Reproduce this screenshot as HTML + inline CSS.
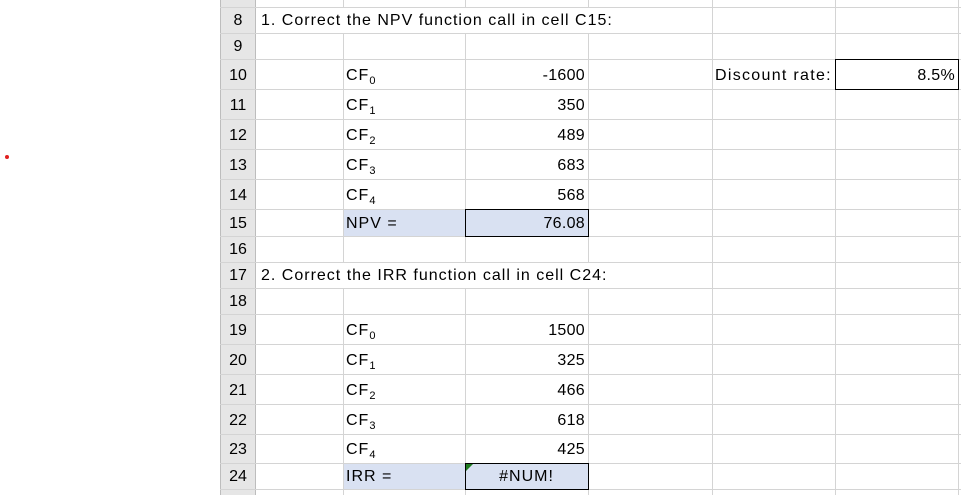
<!DOCTYPE html><html><head><meta charset="utf-8"><style>
body{margin:0;width:961px;height:495px;overflow:hidden;background:#fff;position:relative;font-family:"Liberation Sans",sans-serif;font-size:16px;color:#000}
.h{position:absolute;left:220px;width:741px;height:1px;background:#d4d4d4}
.v{position:absolute;top:0;height:495px;width:1px;background:#d4d4d4}
.t{position:absolute;white-space:nowrap;line-height:18px;letter-spacing:1px}
.r{text-align:right;letter-spacing:0.3px}
.n{position:absolute;left:220px;width:36px;text-align:center;line-height:18px}
sub{font-size:11px;vertical-align:-4px;line-height:0}
</style></head><body>
<div style="position:absolute;left:220px;top:0;width:36px;height:495px;background:#e6e6e6"></div>
<div style="position:absolute;left:343px;top:209px;width:245px;height:27px;background:#d9e1f2"></div>
<div style="position:absolute;left:343px;top:463px;width:245px;height:26px;background:#d9e1f2"></div>
<div class="v" style="left:220px;background:#bdbdbd"></div>
<div class="v" style="left:255px;background:#bdbdbd"></div>
<div class="v" style="left:343px"></div><div class="v" style="left:465px"></div>
<div class="v" style="left:588px"></div><div class="v" style="left:712px"></div>
<div class="v" style="left:835px"></div><div class="v" style="left:958px"></div>
<div class="h" style="top:7px"></div><div class="h" style="top:33px"></div><div class="h" style="top:59px"></div><div class="h" style="top:89px"></div><div class="h" style="top:119px"></div><div class="h" style="top:149px"></div><div class="h" style="top:179px"></div><div class="h" style="top:209px"></div><div class="h" style="top:236px"></div><div class="h" style="top:262px"></div><div class="h" style="top:288px"></div><div class="h" style="top:314px"></div><div class="h" style="top:344px"></div><div class="h" style="top:374px"></div><div class="h" style="top:404px"></div><div class="h" style="top:434px"></div><div class="h" style="top:463px"></div><div class="h" style="top:489px"></div>
<div style="position:absolute;left:256px;top:8px;width:455px;height:25px;background:#fff"></div>
<div style="position:absolute;left:256px;top:263px;width:455px;height:25px;background:#fff"></div>
<div style="position:absolute;left:465px;top:209px;width:122px;height:26px;border:1px solid #000"></div>
<div style="position:absolute;left:465px;top:463px;width:122px;height:25px;border:1px solid #000"></div>
<div style="position:absolute;left:835px;top:59px;width:122px;height:29px;border:1px solid #000"></div>
<div style="position:absolute;left:466px;top:464px;width:0;height:0;border-top:7px solid #1e7b1e;border-right:7px solid transparent"></div>
<div style="position:absolute;left:5px;top:155px;width:4px;height:4px;border-radius:50%;background:#e02020"></div>

<div class="n" style="top:12px">8</div><div class="n" style="top:38px">9</div>
<div class="n" style="top:67px">10</div><div class="n" style="top:97px">11</div><div class="n" style="top:127px">12</div><div class="n" style="top:157px">13</div><div class="n" style="top:187px">14</div><div class="n" style="top:215px">15</div><div class="n" style="top:241px">16</div><div class="n" style="top:267px">17</div><div class="n" style="top:293px">18</div><div class="n" style="top:322px">19</div><div class="n" style="top:352px">20</div><div class="n" style="top:382px">21</div><div class="n" style="top:412px">22</div><div class="n" style="top:441px">23</div><div class="n" style="top:468px">24</div>

<div class="t" style="left:261px;top:12px">1. Correct the NPV function call in cell C15:</div>
<div class="t" style="left:261px;top:267px">2. Correct the IRR function call in cell C24:</div>

<div class="t" style="left:346px;top:67px">CF<sub>0</sub></div><div class="t r" style="left:465px;width:120px;top:67px">-1600</div>
<div class="t" style="left:346px;top:97px">CF<sub>1</sub></div><div class="t r" style="left:465px;width:120px;top:97px">350</div>
<div class="t" style="left:346px;top:127px">CF<sub>2</sub></div><div class="t r" style="left:465px;width:120px;top:127px">489</div>
<div class="t" style="left:346px;top:157px">CF<sub>3</sub></div><div class="t r" style="left:465px;width:120px;top:157px">683</div>
<div class="t" style="left:346px;top:187px">CF<sub>4</sub></div><div class="t r" style="left:465px;width:120px;top:187px">568</div>
<div class="t" style="left:346px;top:215px">NPV =</div><div class="t r" style="left:465px;width:120px;top:215px">76.08</div>
<div class="t" style="left:715px;top:67px;letter-spacing:1.3px">Discount rate:</div><div class="t r" style="left:835px;width:120px;top:67px">8.5%</div>

<div class="t" style="left:346px;top:322px">CF<sub>0</sub></div><div class="t r" style="left:465px;width:120px;top:322px">1500</div>
<div class="t" style="left:346px;top:352px">CF<sub>1</sub></div><div class="t r" style="left:465px;width:120px;top:352px">325</div>
<div class="t" style="left:346px;top:382px">CF<sub>2</sub></div><div class="t r" style="left:465px;width:120px;top:382px">466</div>
<div class="t" style="left:346px;top:412px">CF<sub>3</sub></div><div class="t r" style="left:465px;width:120px;top:412px">618</div>
<div class="t" style="left:346px;top:441px">CF<sub>4</sub></div><div class="t r" style="left:465px;width:120px;top:441px">425</div>
<div class="t" style="left:346px;top:468px">IRR =</div><div class="t" style="left:465px;width:123px;text-align:center;top:468px">#NUM!</div>
</body></html>
